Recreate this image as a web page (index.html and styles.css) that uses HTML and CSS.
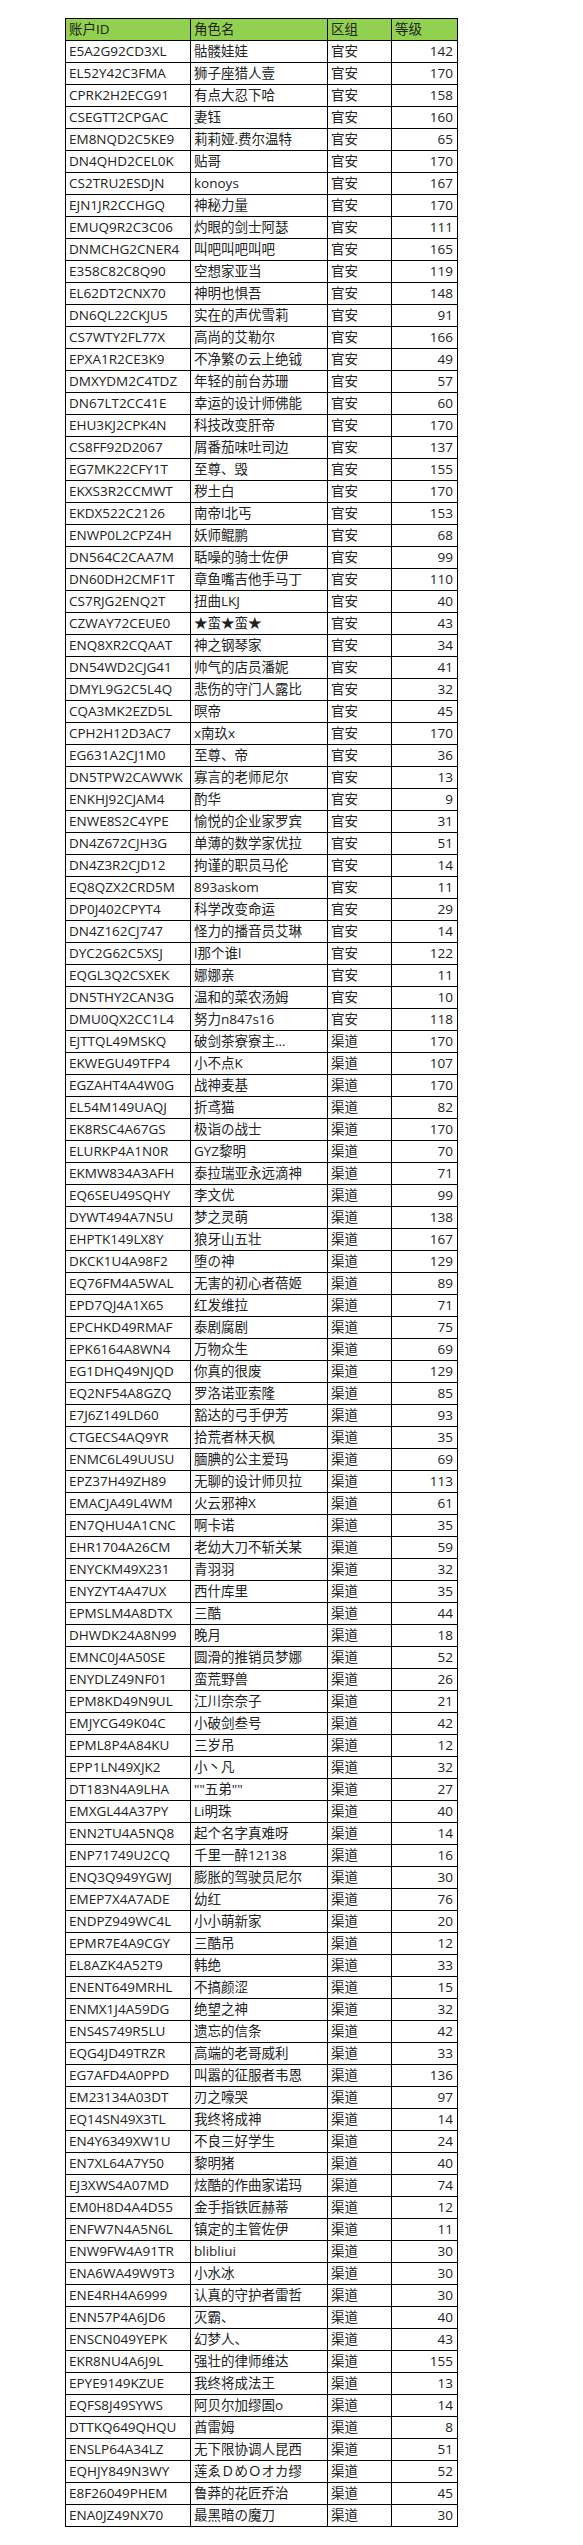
FILE: index.html
```html
<!DOCTYPE html>
<html lang="zh-CN">
<head>
<meta charset="utf-8">
<title>账户列表</title>
<link rel="stylesheet" href="styles.css">
</head>
<body>
<table class="sheet">
<colgroup><col class="c-id"><col class="c-name"><col class="c-zone"><col class="c-lvl"></colgroup>
<thead>
<tr><th>账户ID</th><th>角色名</th><th>区组</th><th>等级</th></tr>
</thead>
<tbody>
<tr><td>E5A2G92CD3XL</td><td>骷髅娃娃</td><td>官安</td><td>142</td></tr>
<tr><td>EL52Y42C3FMA</td><td>狮子座猎人壹</td><td>官安</td><td>170</td></tr>
<tr><td>CPRK2H2ECG91</td><td>有点大忍下哈</td><td>官安</td><td>158</td></tr>
<tr><td>CSEGTT2CPGAC</td><td>妻钰</td><td>官安</td><td>160</td></tr>
<tr><td>EM8NQD2C5KE9</td><td>莉莉娅.费尔温特</td><td>官安</td><td>65</td></tr>
<tr><td>DN4QHD2CEL0K</td><td>贴哥</td><td>官安</td><td>170</td></tr>
<tr><td>CS2TRU2ESDJN</td><td>konoys</td><td>官安</td><td>167</td></tr>
<tr><td>EJN1JR2CCHGQ</td><td>神秘力量</td><td>官安</td><td>170</td></tr>
<tr><td>EMUQ9R2C3C06</td><td>灼眼的剑士阿瑟</td><td>官安</td><td>111</td></tr>
<tr><td>DNMCHG2CNER4</td><td>叫吧叫吧叫吧</td><td>官安</td><td>165</td></tr>
<tr><td>E358C82C8Q90</td><td>空想家亚当</td><td>官安</td><td>119</td></tr>
<tr><td>EL62DT2CNX70</td><td>神明也惧吾</td><td>官安</td><td>148</td></tr>
<tr><td>DN6QL22CKJU5</td><td>实在的声优雪莉</td><td>官安</td><td>91</td></tr>
<tr><td>CS7WTY2FL77X</td><td>高尚的艾勒尔</td><td>官安</td><td>166</td></tr>
<tr><td>EPXA1R2CE3K9</td><td>不净繁の云上绝钺</td><td>官安</td><td>49</td></tr>
<tr><td>DMXYDM2C4TDZ</td><td>年轻的前台苏珊</td><td>官安</td><td>57</td></tr>
<tr><td>DN67LT2CC41E</td><td>幸运的设计师佛能</td><td>官安</td><td>60</td></tr>
<tr><td>EHU3KJ2CPK4N</td><td>科技改变肝帝</td><td>官安</td><td>170</td></tr>
<tr><td>CS8FF92D2067</td><td>屑番茄味吐司边</td><td>官安</td><td>137</td></tr>
<tr><td>EG7MK22CFY1T</td><td>至尊、毁</td><td>官安</td><td>155</td></tr>
<tr><td>EKXS3R2CCMWT</td><td>秽土白</td><td>官安</td><td>170</td></tr>
<tr><td>EKDX522C2126</td><td>南帝l北丐</td><td>官安</td><td>153</td></tr>
<tr><td>ENWP0L2CPZ4H</td><td>妖师鲲鹏</td><td>官安</td><td>68</td></tr>
<tr><td>DN564C2CAA7M</td><td>聒噪的骑士佐伊</td><td>官安</td><td>99</td></tr>
<tr><td>DN60DH2CMF1T</td><td>章鱼嘴吉他手马丁</td><td>官安</td><td>110</td></tr>
<tr><td>CS7RJG2ENQ2T</td><td>扭曲LKJ</td><td>官安</td><td>40</td></tr>
<tr><td>CZWAY72CEUE0</td><td>★蛮★蛮★</td><td>官安</td><td>43</td></tr>
<tr><td>ENQ8XR2CQAAT</td><td>神之钢琴家</td><td>官安</td><td>34</td></tr>
<tr><td>DN54WD2CJG41</td><td>帅气的店员潘妮</td><td>官安</td><td>41</td></tr>
<tr><td>DMYL9G2C5L4Q</td><td>悲伤的守门人露比</td><td>官安</td><td>32</td></tr>
<tr><td>CQA3MK2EZD5L</td><td>暝帝</td><td>官安</td><td>45</td></tr>
<tr><td>CPH2H12D3AC7</td><td>x南玖x</td><td>官安</td><td>170</td></tr>
<tr><td>EG631A2CJ1M0</td><td>至尊、帝</td><td>官安</td><td>36</td></tr>
<tr><td>DN5TPW2CAWWK</td><td>寡言的老师尼尔</td><td>官安</td><td>13</td></tr>
<tr><td>ENKHJ92CJAM4</td><td>酌华</td><td>官安</td><td>9</td></tr>
<tr><td>ENWE8S2C4YPE</td><td>愉悦的企业家罗宾</td><td>官安</td><td>31</td></tr>
<tr><td>DN4Z672CJH3G</td><td>单薄的数学家优拉</td><td>官安</td><td>51</td></tr>
<tr><td>DN4Z3R2CJD12</td><td>拘谨的职员马伦</td><td>官安</td><td>14</td></tr>
<tr><td>EQ8QZX2CRD5M</td><td>893askom</td><td>官安</td><td>11</td></tr>
<tr><td>DP0J402CPYT4</td><td>科学改变命运</td><td>官安</td><td>29</td></tr>
<tr><td>DN4Z162CJ747</td><td>怪力的播音员艾琳</td><td>官安</td><td>14</td></tr>
<tr><td>DYC2G62C5XSJ</td><td>l那个谁l</td><td>官安</td><td>122</td></tr>
<tr><td>EQGL3Q2CSXEK</td><td>娜娜亲</td><td>官安</td><td>11</td></tr>
<tr><td>DN5THY2CAN3G</td><td>温和的菜农汤姆</td><td>官安</td><td>10</td></tr>
<tr><td>DMU0QX2CC1L4</td><td>努力n847s16</td><td>官安</td><td>118</td></tr>
<tr><td>EJTTQL49MSKQ</td><td>破剑茶寮寮主...</td><td>渠道</td><td>170</td></tr>
<tr><td>EKWEGU49TFP4</td><td>小不点K</td><td>渠道</td><td>107</td></tr>
<tr><td>EGZAHT4A4W0G</td><td>战神麦基</td><td>渠道</td><td>170</td></tr>
<tr><td>EL54M149UAQJ</td><td>折鸢猫</td><td>渠道</td><td>82</td></tr>
<tr><td>EK8RSC4A67GS</td><td>极诣の战士</td><td>渠道</td><td>170</td></tr>
<tr><td>ELURKP4A1N0R</td><td>GYZ黎明</td><td>渠道</td><td>70</td></tr>
<tr><td>EKMW834A3AFH</td><td>泰拉瑞亚永远滴神</td><td>渠道</td><td>71</td></tr>
<tr><td>EQ6SEU49SQHY</td><td>李文优</td><td>渠道</td><td>99</td></tr>
<tr><td>DYWT494A7N5U</td><td>梦之灵萌</td><td>渠道</td><td>138</td></tr>
<tr><td>EHPTK149LX8Y</td><td>狼牙山五壮</td><td>渠道</td><td>167</td></tr>
<tr><td>DKCK1U4A98F2</td><td>堕の神</td><td>渠道</td><td>129</td></tr>
<tr><td>EQ76FM4A5WAL</td><td>无害的初心者蓓姬</td><td>渠道</td><td>89</td></tr>
<tr><td>EPD7QJ4A1X65</td><td>红发维拉</td><td>渠道</td><td>71</td></tr>
<tr><td>EPCHKD49RMAF</td><td>泰剧腐剧</td><td>渠道</td><td>75</td></tr>
<tr><td>EPK6164A8WN4</td><td>万物众生</td><td>渠道</td><td>69</td></tr>
<tr><td>EG1DHQ49NJQD</td><td>你真的很废</td><td>渠道</td><td>129</td></tr>
<tr><td>EQ2NF54A8GZQ</td><td>罗洛诺亚索隆</td><td>渠道</td><td>85</td></tr>
<tr><td>E7J6Z149LD60</td><td>豁达的弓手伊芳</td><td>渠道</td><td>93</td></tr>
<tr><td>CTGECS4AQ9YR</td><td>拾荒者林天枫</td><td>渠道</td><td>35</td></tr>
<tr><td>ENMC6L49UUSU</td><td>腼腆的公主爱玛</td><td>渠道</td><td>69</td></tr>
<tr><td>EPZ37H49ZH89</td><td>无聊的设计师贝拉</td><td>渠道</td><td>113</td></tr>
<tr><td>EMACJA49L4WM</td><td>火云邪神X</td><td>渠道</td><td>61</td></tr>
<tr><td>EN7QHU4A1CNC</td><td>啊卡诺</td><td>渠道</td><td>35</td></tr>
<tr><td>EHR1704A26CM</td><td>老幼大刀不斩关某</td><td>渠道</td><td>59</td></tr>
<tr><td>ENYCKM49X231</td><td>青羽羽</td><td>渠道</td><td>32</td></tr>
<tr><td>ENYZYT4A47UX</td><td>西什库里</td><td>渠道</td><td>35</td></tr>
<tr><td>EPMSLM4A8DTX</td><td>三酷</td><td>渠道</td><td>44</td></tr>
<tr><td>DHWDK24A8N99</td><td>晚月</td><td>渠道</td><td>18</td></tr>
<tr><td>EMNC0J4A50SE</td><td>圆滑的推销员梦娜</td><td>渠道</td><td>52</td></tr>
<tr><td>ENYDLZ49NF01</td><td>蛮荒野兽</td><td>渠道</td><td>26</td></tr>
<tr><td>EPM8KD49N9UL</td><td>江川奈奈子</td><td>渠道</td><td>21</td></tr>
<tr><td>EMJYCG49K04C</td><td>小破剑叁号</td><td>渠道</td><td>42</td></tr>
<tr><td>EPML8P4A84KU</td><td>三岁吊</td><td>渠道</td><td>12</td></tr>
<tr><td>EPP1LN49XJK2</td><td>小丶凡</td><td>渠道</td><td>32</td></tr>
<tr><td>DT183N4A9LHA</td><td>""五弟""</td><td>渠道</td><td>27</td></tr>
<tr><td>EMXGL44A37PY</td><td>Li明珠</td><td>渠道</td><td>40</td></tr>
<tr><td>ENN2TU4A5NQ8</td><td>起个名字真难呀</td><td>渠道</td><td>14</td></tr>
<tr><td>ENP71749U2CQ</td><td>千里一醉12138</td><td>渠道</td><td>16</td></tr>
<tr><td>ENQ3Q949YGWJ</td><td>膨胀的驾驶员尼尔</td><td>渠道</td><td>30</td></tr>
<tr><td>EMEP7X4A7ADE</td><td>幼红</td><td>渠道</td><td>76</td></tr>
<tr><td>ENDPZ949WC4L</td><td>小小萌新家</td><td>渠道</td><td>20</td></tr>
<tr><td>EPMR7E4A9CGY</td><td>三酷吊</td><td>渠道</td><td>12</td></tr>
<tr><td>EL8AZK4A52T9</td><td>韩绝</td><td>渠道</td><td>33</td></tr>
<tr><td>ENENT649MRHL</td><td>不搞颜涩</td><td>渠道</td><td>15</td></tr>
<tr><td>ENMX1J4A59DG</td><td>绝望之神</td><td>渠道</td><td>32</td></tr>
<tr><td>ENS4S749R5LU</td><td>遗忘的信条</td><td>渠道</td><td>42</td></tr>
<tr><td>EQG4JD49TRZR</td><td>高端的老哥威利</td><td>渠道</td><td>33</td></tr>
<tr><td>EG7AFD4A0PPD</td><td>叫嚣的征服者韦恩</td><td>渠道</td><td>136</td></tr>
<tr><td>EM23134A03DT</td><td>刃之嚎哭</td><td>渠道</td><td>97</td></tr>
<tr><td>EQ14SN49X3TL</td><td>我终将成神</td><td>渠道</td><td>14</td></tr>
<tr><td>EN4Y6349XW1U</td><td>不良三好学生</td><td>渠道</td><td>24</td></tr>
<tr><td>EN7XL64A7Y50</td><td>黎明猪</td><td>渠道</td><td>40</td></tr>
<tr><td>EJ3XWS4A07MD</td><td>炫酷的作曲家诺玛</td><td>渠道</td><td>74</td></tr>
<tr><td>EM0H8D4A4D55</td><td>金手指铁匠赫蒂</td><td>渠道</td><td>12</td></tr>
<tr><td>ENFW7N4A5N6L</td><td>镇定的主管佐伊</td><td>渠道</td><td>11</td></tr>
<tr><td>ENW9FW4A91TR</td><td>blibliui</td><td>渠道</td><td>30</td></tr>
<tr><td>ENA6WA49W9T3</td><td>小水冰</td><td>渠道</td><td>30</td></tr>
<tr><td>ENE4RH4A6999</td><td>认真的守护者雷哲</td><td>渠道</td><td>30</td></tr>
<tr><td>ENN57P4A6JD6</td><td>灭霸、</td><td>渠道</td><td>40</td></tr>
<tr><td>ENSCN049YEPK</td><td>幻梦人、</td><td>渠道</td><td>43</td></tr>
<tr><td>EKR8NU4A6J9L</td><td>强壮的律师维达</td><td>渠道</td><td>155</td></tr>
<tr><td>EPYE9149KZUE</td><td>我终将成法王</td><td>渠道</td><td>13</td></tr>
<tr><td>EQFS8J49SYWS</td><td>阿贝尔加缪圄o</td><td>渠道</td><td>14</td></tr>
<tr><td>DTTKQ649QHQU</td><td>酋雷姆</td><td>渠道</td><td>8</td></tr>
<tr><td>ENSLP64A34LZ</td><td>无下限协调人昆西</td><td>渠道</td><td>51</td></tr>
<tr><td>EQHJY849N3WY</td><td>莲ゑＤめＯオカ缪</td><td>渠道</td><td>52</td></tr>
<tr><td>E8F26049PHEM</td><td>鲁莽的花匠乔治</td><td>渠道</td><td>45</td></tr>
<tr><td>ENA0JZ49NX70</td><td>最黑暗の魔刀</td><td>渠道</td><td>30</td></tr>
</tbody>
</table>
</body>
</html>
```

FILE: styles.css
```css
html, body {
  margin: 0;
  padding: 0;
  background: #ffffff;
}

body {
  padding: 18px 0 19px 65px;
  font-family: "Open Sans", "Noto Sans CJK SC", sans-serif;
  font-weight: 400;
  font-size: 13.5px;
  color: #222222;
}

.sheet {
  border-collapse: collapse;
  table-layout: fixed;
  width: 393px;
}

.c-id { width: 125px; }
.c-name { width: 137px; }
.c-zone { width: 64px; }
.c-lvl { width: 66px; }

.sheet th,
.sheet td {
  border: 1px solid #000;
  padding: 0 3px;
  height: 21px;
  line-height: 21px;
  white-space: nowrap;
  overflow: hidden;
  text-align: left;
  font-weight: 400;
}

.sheet th {
  background: #92d050;
}

.sheet td:nth-child(4) {
  text-align: right;
  padding-right: 4px;
}
```
